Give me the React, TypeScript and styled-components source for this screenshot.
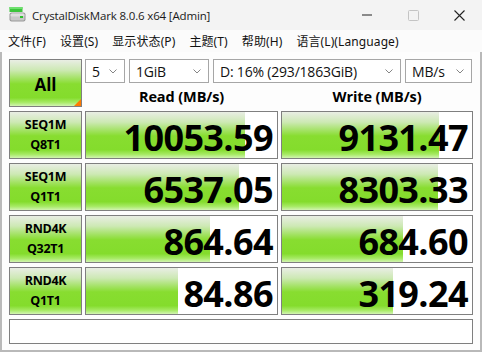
import React from "react";
import styled, { createGlobalStyle } from "styled-components";

const Global = createGlobalStyle`
  html, body { margin: 0; padding: 0; background: #ffffff; }
  body { width: 482px; height: 352px; overflow: hidden; }
  * { box-sizing: border-box; }
`;

const UI = `"Open Sans", "Noto Sans", "Noto Sans CJK SC", sans-serif`;

const GREEN = `linear-gradient(to bottom, #e9eee4 0%, #cde9b4 22%, #a3e264 40%, #88dd30 52%, #84dc2c 82%, #a6ea64 92%, #d2f4b2 100%)`;

const Window = styled.div`
  width: 482px;
  height: 352px;
  display: flex;
  flex-direction: column;
  font-family: ${UI};
`;

const TitleBar = styled.div`
  height: 30px;
  flex: none;
  background: #f3f3f3;
  display: flex;
  align-items: center;
  padding-left: 9px;
`;

const TitleText = styled.div`
  margin-left: 6px;
  font-size: 11.5px;
  color: #1a1a1a;
  flex: 1;
  letter-spacing: -0.15px;
`;

const Controls = styled.div`
  display: flex;
  height: 30px;
`;

const CtrlBtn = styled.div`
  width: 46px;
  height: 30px;
  display: flex;
  align-items: center;
  justify-content: center;
`;

const MenuBar = styled.div`
  height: 22px;
  flex: none;
  background: #fbfbfb;
  display: flex;
  align-items: center;
  padding-left: 1px;
`;

const MenuItem = styled.div`
  font-family: "Noto Sans", "Noto Sans CJK SC", sans-serif;
  font-size: 12px;
  color: #111;
  padding: 0 7px;
  letter-spacing: 0.1px;
`;

const Content = styled.div`
  flex: 1;
  background: #fdfdfd;
  border: 2px solid #b9b9b9;
  border-top: none;
  padding: 7px 7px 6px 7px;
  display: grid;
  grid-template-columns: 73px 193px 192px;
  grid-template-rows: 48px repeat(4, 48px) 25px;
  column-gap: 3px;
  row-gap: 4px;
`;

const GreenCell = styled.div`
  border: 1px solid #7f7f7f;
  background: ${GREEN};
  display: flex;
  flex-direction: column;
  align-items: center;
  justify-content: center;
  color: #000;
  font-weight: 700;
  position: relative;
`;

const AllButton = styled(GreenCell)`
  font-size: 17px;
  padding-top: 2px;
  &::after {
    content: "";
    position: absolute;
    right: 0;
    bottom: 0;
    width: 0;
    height: 0;
    border-style: solid;
    border-width: 0 0 7px 7px;
    border-color: transparent transparent #ff7a00 transparent;
  }
`;

const LabelLine = styled.div`
  font-size: 12.5px;
  line-height: 20px;
  letter-spacing: -0.3px;
`;

const TopArea = styled.div`
  grid-column: 2 / 4;
  display: flex;
  flex-direction: column;
`;

const SelectRow = styled.div`
  display: flex;
  gap: 4px;
  height: 24px;
`;

const Select = styled.div<{ $w: number }>`
  width: ${(p) => p.$w}px;
  height: 24px;
  flex: none;
  border: 1px solid #a6a6a6;
  background: #fff;
  display: flex;
  align-items: center;
  padding: 0 7px 0 6px;
  font-size: 14px;
  color: #111;
  letter-spacing: -0.2px;
`;

const SelectText = styled.span`
  flex: 1;
  white-space: nowrap;
  overflow: hidden;
`;

const HeaderRow = styled.div`
  display: grid;
  grid-template-columns: 193px 192px;
  column-gap: 3px;
  height: 24px;
`;

const Header = styled.div`
  display: flex;
  align-items: flex-end;
  justify-content: center;
  font-size: 14.5px;
  font-weight: 700;
  color: #000;
  padding-bottom: 1px;
  letter-spacing: -0.1px;
`;

const ValueCell = styled.div`
  border: 1px solid #7f7f7f;
  background-color: #fff;
  background-image: ${GREEN};
  background-repeat: no-repeat;
  display: flex;
  align-items: center;
  justify-content: flex-end;
  padding: 5px 4px 0 0;
  font-family: "Open Sans", "Noto Sans", sans-serif;
  font-weight: 700;
  font-size: 36px;
  letter-spacing: -0.6px;
  color: #000;
  line-height: 1;
`;

const StatusBar = styled.div`
  grid-column: 1 / 4;
  border: 1px solid #7f7f7f;
  background: #fff;
`;

const AppIcon = () => (
  <svg width="17" height="16" viewBox="0 0 17 16">
    <rect x="0.5" y="0" width="13" height="5" fill="#3cc43c" />
    <rect x="0.5" y="0" width="13" height="2" fill="#6ee06e" />
    <rect x="0.5" y="5.5" width="16" height="9" rx="2" fill="#9a9a9a" />
    <rect x="1.5" y="6.5" width="14" height="7" rx="1.5" fill="#c8c8c8" />
    <rect x="1.5" y="6.5" width="14" height="3" rx="1.5" fill="#dedede" />
    <rect x="11" y="9" width="3" height="2" fill="#30c030" />
  </svg>
);

const Chevron = () => (
  <svg width="8" height="5" viewBox="0 0 8 5">
    <path d="M0.5 0.5 L4 4 L7.5 0.5" fill="none" stroke="#777" strokeWidth="0.9" />
  </svg>
);

const rows = [
  { l1: "SEQ1M", l2: "Q8T1", read: "10053.59", rf: 159, write: "9131.47", wf: 157 },
  { l1: "SEQ1M", l2: "Q1T1", read: "6537.05", rf: 153, write: "8303.33", wf: 156 },
  { l1: "RND4K", l2: "Q32T1", read: "864.64", rf: 124, write: "684.60", wf: 121 },
  { l1: "RND4K", l2: "Q1T1", read: "84.86", rf: 92, write: "319.24", wf: 111 },
];

const selects = [
  { t: "5", w: 40 },
  { t: "1GiB", w: 80 },
  { t: "D: 16% (293/1863GiB)", w: 188 },
  { t: "MB/s", w: 67 },
];

const menus = ["文件(F)", "设置(S)", "显示状态(P)", "主题(T)", "帮助(H)", "语言(L)(Language)"];

export default function App() {
  return (
    <>
      <Global />
      <Window>
        <TitleBar>
          <AppIcon />
          <TitleText>CrystalDiskMark 8.0.6 x64 [Admin]</TitleText>
          <Controls>
            <CtrlBtn>
              <svg width="11" height="2" viewBox="0 0 11 2">
                <rect x="0" y="0.5" width="10" height="1" fill="#222" />
              </svg>
            </CtrlBtn>
            <CtrlBtn>
              <svg width="11" height="11" viewBox="0 0 11 11">
                <rect x="0.5" y="0.5" width="10" height="10" rx="1" fill="none" stroke="#c4c4c4" />
              </svg>
            </CtrlBtn>
            <CtrlBtn>
              <svg width="11" height="11" viewBox="0 0 11 11">
                <path d="M0.5 0.5 L10.5 10.5 M10.5 0.5 L0.5 10.5" stroke="#222" strokeWidth="1.1" />
              </svg>
            </CtrlBtn>
          </Controls>
        </TitleBar>
        <MenuBar>
          {menus.map((m) => (
            <MenuItem key={m}>{m}</MenuItem>
          ))}
        </MenuBar>
        <Content>
          <AllButton>All</AllButton>
          <TopArea>
            <SelectRow>
              {selects.map((s) => (
                <Select key={s.t} $w={s.w}>
                  <SelectText>{s.t}</SelectText>
                  <Chevron />
                </Select>
              ))}
            </SelectRow>
            <HeaderRow>
              <Header>Read (MB/s)</Header>
              <Header>Write (MB/s)</Header>
            </HeaderRow>
          </TopArea>
          {rows.map((r) => (
            <React.Fragment key={r.l1 + r.l2}>
              <GreenCell>
                <LabelLine>{r.l1}</LabelLine>
                <LabelLine>{r.l2}</LabelLine>
              </GreenCell>
              <ValueCell style={{ backgroundSize: `${r.rf}px 100%` }}>{r.read}</ValueCell>
              <ValueCell style={{ backgroundSize: `${r.wf}px 100%` }}>{r.write}</ValueCell>
            </React.Fragment>
          ))}
          <StatusBar />
        </Content>
      </Window>
    </>
  );
}
